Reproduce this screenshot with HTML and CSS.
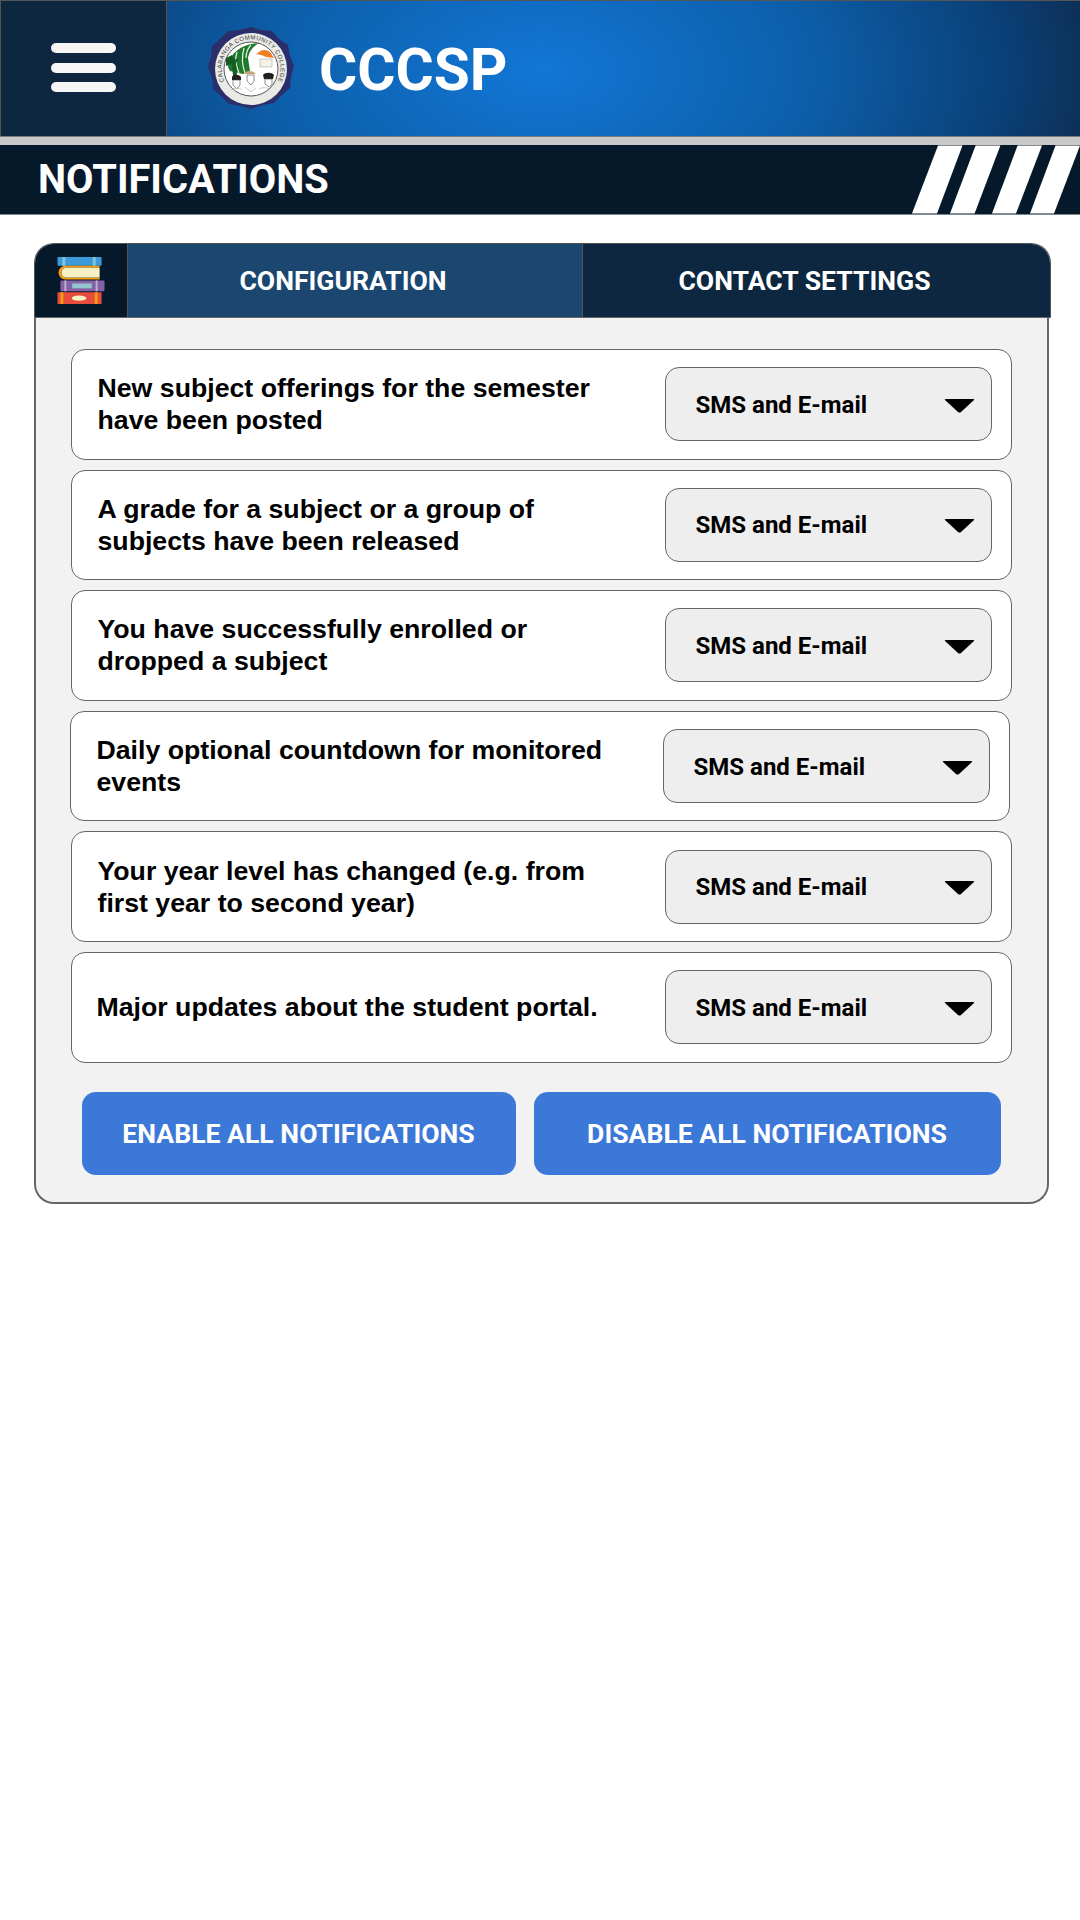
FILE: index.html
```html
<!DOCTYPE html>
<html lang="en">
<head>
  <meta charset="UTF-8" />
  <meta name="viewport" content="width=device-width, initial-scale=1.0"/>
  <title>CCCSP Notifications</title>
  <link rel="stylesheet" href="styles.css">
</head>
<body>

  <header class="topbar">
    <div class="menu-cell">
      <div class="menu-icon"><span></span><span></span><span></span></div>
    </div>
    <div class="brand">
      <svg class="logo" viewBox="0 0 88 84" aria-hidden="true">
        <path d="M44 0l10 3 11 1 7 8 9 6 2 11 4 10-3 11-1 11-8 7-8 8-11 2-12 4-11-3-11-2-8-8-8-7-1-11-4-11 3-10 1-11 8-7 8-8 11-1z" fill="#2a2f6b"/>
        <circle cx="44" cy="42" r="36" fill="#e9e9e6"/>
        <defs>
          <path id="sealArc" d="M17.300 54.500A29.500 29.500 0 1 1 70.700 54.500"/>
        </defs>
        <text class="seal-text"><textPath href="#sealArc" textLength="118" lengthAdjust="spacing">CALABANGA COMMUNITY COLLEGE</textPath></text>
        <circle cx="44" cy="42" r="27" fill="#fff" stroke="#555" stroke-width="1"/>
        <path d="M21 40c1-13 13-23 31-24-7 4-10 9-11 15l2 13-7 3-13-3z" fill="#1f7a2c"/>
        <path d="M30 25c-2 6-1 14 2 21M37 21c-2 7-2 17 1 25M44 18c-3 3-5 8-5 13" stroke="#e8f3e6" stroke-width="1.200" fill="none"/>
        <path d="M19 31l6-3 3 5 4-3-3 6 1 13h-4l-1-12-6 2z" fill="#145c22"/>
        <path d="M49 28c4-6 10-6 14-3l4 6-8-1c-4-2-7-3-10-2z" fill="#ee7f23"/>
        <path d="M53 32h12v8H53z" fill="#f4f1e6" stroke="#aaa" stroke-width=".6"/>
        <path d="M37 47c2-4 9-4 12 0z" fill="#c9a57b"/>
        <path d="M25 50c1-3 7-3 9 0v3h-9zM56 48c2-3 9-3 11 0l-1 4H57z" fill="#20201e"/>
        <path d="M26 53h7v5l-3 4-4-4zM40 48h7v6l-3 4-4-4zM58 52h7v5l-3 3-4-3z" fill="#fff" stroke="#444" stroke-width=".6"/>
        <path d="M24 63c4-3 8-2 11 0M52 62c4-2 8-2 11 1M38 60l6 5 5-4" stroke="#bbb" stroke-width=".8" fill="none"/>
      </svg>
      <span class="brand-name">CCCSP</span>
    </div>
  </header>

  <div class="title-bar">
    <h1>NOTIFICATIONS</h1>
    <svg class="stripes" viewBox="0 0 168 68" aria-hidden="true">
      <path d="M26 0H50.500L25 68H0Z"/>
      <path d="M63.600 0H88.400L62.600 68H38Z"/>
      <path d="M105.600 0H130L104 68H80Z"/>
      <path d="M143.500 0H168L142 68H118Z"/>
    </svg>
  </div>

  <main class="card">
    <div class="tabs">
      <div class="tab-icon">
        <svg class="books" viewBox="0 0 48 48" aria-hidden="true">
          <rect x="0" y="0" width="45" height="9" rx="1" fill="#3d9ad9"/>
          <rect x="5" y="0" width="3" height="9" fill="#7fc4d8"/>
          <rect x="36" y="0" width="3" height="9" fill="#7fc4d8"/>
          <path d="M43 9H8a6.500 6.500 0 0 0 0 14h35v-2H9a4.500 4.500 0 0 1 0-10h34z" fill="#f39c12"/>
          <path d="M43 11H9a4.500 4.500 0 0 0 0 10h34z" fill="#f8efc4"/>
          <rect x="3" y="24" width="45" height="11" rx="1" fill="#8462a8"/>
          <rect x="7" y="24" width="2" height="11" fill="#c0aed3"/>
          <rect x="39" y="24" width="2" height="11" fill="#c0aed3"/>
          <rect x="15" y="27" width="20" height="5" fill="#94c6cf"/>
          <rect x="0" y="36" width="45" height="12" rx="1" fill="#e74c3c"/>
          <rect x="3" y="36" width="3" height="12" fill="#f39c12"/>
          <rect x="38" y="36" width="3" height="12" fill="#f39c12"/>
          <ellipse cx="22" cy="42" rx="7.500" ry="2.800" fill="#f8efc4"/>
        </svg>
      </div>
      <div class="tab tab-active">CONFIGURATION</div>
      <div class="tab tab-contact">CONTACT SETTINGS</div>
    </div>

    <div class="panel">
      <div class="rows">
        <div class="row">
          <p class="row-label">New subject offerings for the semester have been posted</p>
          <div class="picker"><span>SMS and E-mail</span><svg class="arrow" viewBox="0 0 31 14"><path d="M2 0H29Q31 0 30 1L17 13Q15.500 14 14 13L1 1Q0 0 2 0Z"/></svg></div>
        </div>
        <div class="row">
          <p class="row-label">A grade for a subject or a group of subjects have been released</p>
          <div class="picker"><span>SMS and E-mail</span><svg class="arrow" viewBox="0 0 31 14"><path d="M2 0H29Q31 0 30 1L17 13Q15.500 14 14 13L1 1Q0 0 2 0Z"/></svg></div>
        </div>
        <div class="row">
          <p class="row-label">You have successfully enrolled or dropped a subject</p>
          <div class="picker"><span>SMS and E-mail</span><svg class="arrow" viewBox="0 0 31 14"><path d="M2 0H29Q31 0 30 1L17 13Q15.500 14 14 13L1 1Q0 0 2 0Z"/></svg></div>
        </div>
        <div class="row row-nudged">
          <p class="row-label">Daily optional countdown for monitored events</p>
          <div class="picker"><span>SMS and E-mail</span><svg class="arrow" viewBox="0 0 31 14"><path d="M2 0H29Q31 0 30 1L17 13Q15.500 14 14 13L1 1Q0 0 2 0Z"/></svg></div>
        </div>
        <div class="row">
          <p class="row-label">Your year level has changed (e.g. from first year to second year)</p>
          <div class="picker"><span>SMS and E-mail</span><svg class="arrow" viewBox="0 0 31 14"><path d="M2 0H29Q31 0 30 1L17 13Q15.500 14 14 13L1 1Q0 0 2 0Z"/></svg></div>
        </div>
        <div class="row">
          <p class="row-label row-label-tight">Major updates about the student portal.</p>
          <div class="picker"><span>SMS and E-mail</span><svg class="arrow" viewBox="0 0 31 14"><path d="M2 0H29Q31 0 30 1L17 13Q15.500 14 14 13L1 1Q0 0 2 0Z"/></svg></div>
        </div>
      </div>

      <div class="actions">
        <button class="action action-enable">ENABLE ALL NOTIFICATIONS</button>
        <button class="action action-disable">DISABLE ALL NOTIFICATIONS</button>
      </div>
    </div>
  </main>

</body>
</html>
```

FILE: styles.css
```css
* {
  box-sizing: border-box;
}

body {
  margin: 0;
  padding: 0;
  background: #fff;
  color: #000;
  font-family: Roboto, sans-serif;
}

.topbar {
  display: flex;
  height: 137px;
  border-top: 1px solid #555;
  border-bottom: 1px solid #7a7a7a;
}

.menu-cell {
  display: flex;
  align-items: center;
  justify-content: center;
  width: 167px;
  padding-bottom: 2px;
  background: #0e2740;
  border-left: 1px solid #555;
  border-right: 1px solid #555;
}

.menu-icon {
  display: flex;
  flex-direction: column;
  gap: 9.500px;
  width: 65px;
}

.menu-icon span {
  height: 10px;
  border-radius: 5px;
  background: #f6f6f6;
}

.brand {
  flex: 1;
  display: flex;
  align-items: center;
  padding-left: 40px;
  background: radial-gradient(ellipse 570px 330px at 375px 70px, #1277d6 0%, #0d5ea9 48%, #0a3f76 82%, #0e2d4f 100%);
}

.logo {
  width: 88px;
  height: 84px;
}

.seal-text {
  font-family: "Liberation Sans", sans-serif;
  font-size: 6px;
  fill: #333;
}

.brand-name {
  margin: 4px 0 0 24px;
  color: #fff;
  font-size: 58.500px;
  font-weight: 700;
  line-height: 1;
}

.title-bar {
  display: flex;
  align-items: stretch;
  justify-content: space-between;
  height: 78px;
  background: #06192b;
  border-top: 8px solid #c8c8c8;
  border-bottom: 1px solid #7c8794;
}

.title-bar h1 {
  margin: 0;
  padding-left: 38px;
  color: #fff;
  font-size: 39.800px;
  font-weight: 700;
  line-height: 70px;
}

.stripes {
  width: 168px;
  height: 69px;
  fill: #fff;
}

.card {
  width: 1017px;
  margin: 28px 0 0 34px;
}

.tabs {
  display: flex;
  height: 75px;
  border-radius: 20px 20px 0 0;
  overflow: hidden;
  border-top: 1px solid #555;
  border-bottom: 1px solid #666;
  border-left: 1px solid #555;
  border-right: 1px solid #555;
  color: #fff;
  font-size: 26.600px;
  font-weight: 700;
}

.tab-icon {
  display: flex;
  align-items: center;
  justify-content: center;
  width: 93px;
  background: #06192b;
  border-right: 1px solid #555;
}

.books {
  width: 48px;
  height: 47px;
}

.tab {
  display: flex;
  align-items: center;
  justify-content: center;
  padding-right: 24px;
}

.tab-active {
  width: 455px;
  background: #1a466f;
  border-right: 1px solid #555;
}

.tab-contact {
  flex: 1;
  background: #0e2740;
}

.panel {
  width: 1015px;
  padding: 31px 24px 27px 34.500px;
  background: #f2f2f2;
  border: 2px solid #666;
  border-top: none;
  border-radius: 0 0 20px 20px;
}

.rows {
  display: flex;
  flex-direction: column;
  gap: 10px;
}

.row {
  display: flex;
  align-items: center;
  justify-content: space-between;
  width: 941px;
  height: 110.600px;
  padding: 0 19px 0 26px;
  background: #fff;
  border: 1px solid #666;
  border-radius: 14px;
}

.row-nudged {
  width: 940px;
  margin-left: -1px;
}

.row-label {
  width: 522px;
  margin: 0;
  font-family: "Liberation Sans", sans-serif;
  font-size: 26.700px;
  font-weight: 700;
  line-height: 32px;
}

.row-label-tight {
  margin-left: -1px;
}

.picker {
  display: flex;
  align-items: center;
  justify-content: space-between;
  width: 327px;
  height: 74px;
  padding: 0 16px 0 30px;
  background: #eee;
  border: 1px solid #666;
  border-radius: 14px;
  font-size: 24px;
  font-weight: 700;
}

.picker span {
  padding-top: 1px;
}

.arrow {
  width: 31px;
  height: 14px;
  margin-top: 3px;
}

.actions {
  display: flex;
  gap: 18px;
  margin: 29px 0 0 11px;
}

.action {
  height: 83px;
  padding: 0;
  background: #3c78d8;
  border: none;
  border-radius: 14px;
  color: #fff;
  font-family: Roboto, sans-serif;
  font-size: 26.600px;
  font-weight: 700;
}

.action-enable {
  width: 434px;
}

.action-disable {
  width: 467px;
}
```
